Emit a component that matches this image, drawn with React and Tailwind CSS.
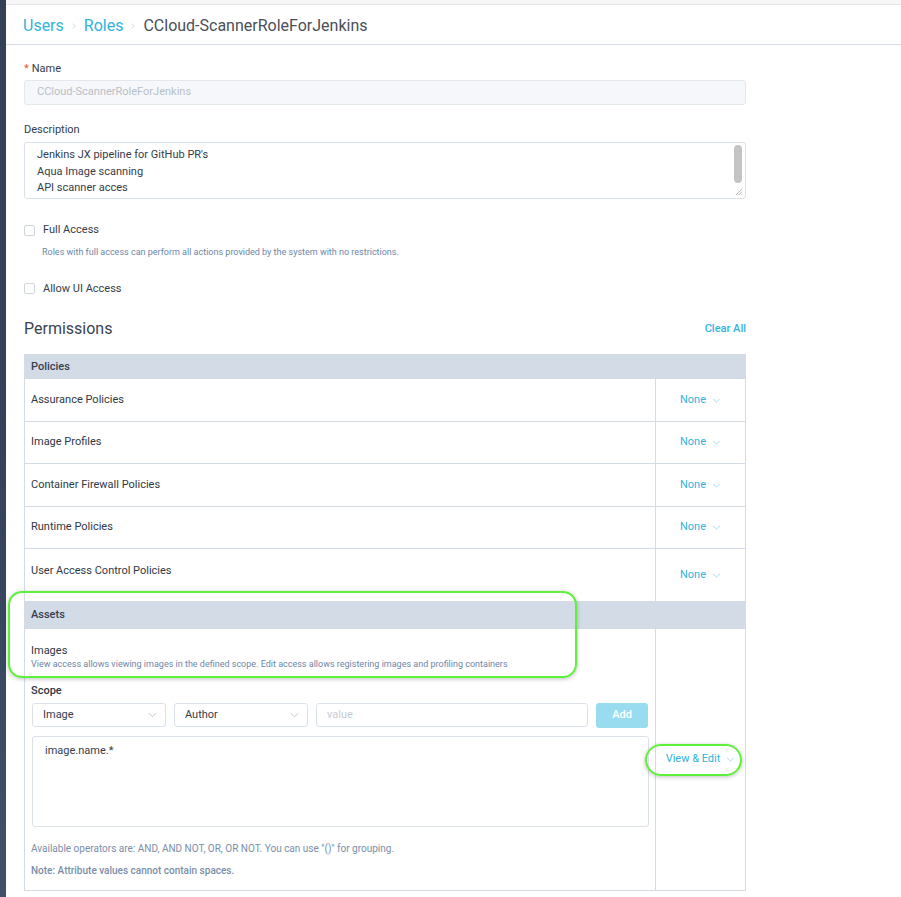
import React from "react";

const font = { fontFamily: "Roboto, 'Liberation Sans', sans-serif" };

const Chevron = ({ className = "" }) => (
  <svg viewBox="0 0 10 6" className={className} fill="none" stroke="currentColor" strokeWidth="1">
    <path d="M1 1l4 4 4-4" />
  </svg>
);

const policies = [
  { name: "Assurance Policies", h: "h-[43px]" },
  { name: "Image Profiles", h: "h-[42px]" },
  { name: "Container Firewall Policies", h: "h-[43px]" },
  { name: "Runtime Policies", h: "h-[42px]" },
  { name: "User Access Control Policies", h: "h-[53px]", last: true },
];

const Checkbox = ({ label }) => (
  <div className="flex items-center gap-[8px]">
    <span className="w-[11px] h-[11px] border border-[#cfd6df] rounded-[2px] bg-white" />
    <span className="text-[11px] text-[#343d4b]">{label}</span>
  </div>
);

const Select = ({ value, w }) => (
  <div className={`${w} h-[24px] border border-[#dbe1e8] rounded-[3px] flex items-center justify-between pl-[10px] pr-[8px]`}>
    <span className="text-[11px] text-[#343d4b]">{value}</span>
    <Chevron className="w-[9px] h-[6px] text-[#b5bfcb]" />
  </div>
);

export default function App() {
  return (
    <div className="relative flex min-h-[897px] bg-white overflow-hidden" style={font}>
      <div className="w-[6px] shrink-0 bg-gradient-to-b from-[#324156] via-[#33425a] to-[#3f5068]" />
      <div className="flex-1 flex flex-col">
        <div className="h-[5px] bg-[#f7f7f7] border-b border-[#e4e4e4]" />
        <div className="h-[40px] border-b border-[#d6dde5] flex items-center px-[17px] pt-[2px] text-[16px]">
          <span className="text-[#31b3dd]">Users</span>
          <Chevron className="w-[6px] h-[8px] mx-[7px] -rotate-90 text-[#b9c2cc]" />
          <span className="text-[#31b3dd]">Roles</span>
          <Chevron className="w-[6px] h-[8px] mx-[7px] -rotate-90 text-[#b9c2cc]" />
          <span className="text-[#4a4f57]">CCloud-ScannerRoleForJenkins</span>
        </div>

        <div className="w-[722px] ml-[18px] flex flex-col">
          <div className="mt-[17px] text-[11px] text-[#343d4b] leading-[14px]">
            <span className="text-[#f0592a] mr-[3px]">*</span>Name
          </div>
          <div className="mt-[4px] h-[25px] bg-[#f5f7fa] border border-[#e3e8ee] rounded-[3px] flex items-center px-[12px] text-[11px] text-[#b8bfc8]">
            CCloud-ScannerRoleForJenkins
          </div>

          <div className="mt-[18px] text-[11px] text-[#343d4b] leading-[14px]">Description</div>
          <div className="relative mt-[5px] h-[57px] border border-[#dbe1e8] rounded-[3px] pl-[12px] pt-[4px] text-[11px] leading-[16.5px] text-[#343d4b]">
            <div>Jenkins JX pipeline for GitHub PR's</div>
            <div>Aqua Image scanning</div>
            <div>API scanner acces</div>
            <div className="absolute right-[3px] top-[2px] w-[8px] h-[38px] rounded-[4px] bg-[#c4c4c4]" />
            <svg viewBox="0 0 10 10" className="absolute right-[2px] bottom-[2px] w-[9px] h-[9px]" stroke="#9a9a9a" strokeWidth="0.8">
              <path d="M9 2L2 9M9 5L5 9M9 8L8 9" />
            </svg>
          </div>

          <div className="mt-[23px]">
            <Checkbox label="Full Access" />
          </div>
          <div className="mt-[7px] ml-[18px] text-[9px] text-[#6e86a8] leading-[12px]">
            Roles with full access can perform all actions provided by the system with no restrictions.
          </div>
          <div className="mt-[23px]">
            <Checkbox label="Allow UI Access" />
          </div>

          <div className="mt-[20px] flex items-center justify-between">
            <span className="text-[16px] text-[#3b4350]">Permissions</span>
            <span className="text-[11px] font-medium text-[#31b3dd]">Clear All</span>
          </div>

          <div className="mt-[13px] border border-[#d3dbe6] border-b-0">
            <div className="h-[24px] bg-[#d3dbe6] flex items-center px-[6px] text-[11px] font-medium text-[#35404f]">
              Policies
            </div>
            {policies.map((p) => (
              <div key={p.name} className={`${p.h} flex border-b border-[#d3dbe6]`}>
                <div className={`flex-1 flex px-[6px] text-[11px] text-[#2f3844] ${p.last ? "pt-[14px]" : "items-center"}`}>
                  {p.name}
                </div>
                <div className="w-[90px] border-l border-[#d3dbe6] flex items-center justify-center gap-[6px] text-[11px] text-[#31b3dd]">
                  None
                  <Chevron className="w-[9px] h-[5px] text-[#8fd3ec]" />
                </div>
              </div>
            ))}
            <div className="h-[27px] bg-[#d3dbe6] flex items-center px-[6px] text-[11px] font-medium text-[#35404f]">
              Assets
            </div>
            <div className="flex border-b border-[#d3dbe6]">
              <div className="flex-1 px-[6px] pt-[15px] pb-[12px]">
                <div className="text-[11px] text-[#2f3844] leading-[13px]">Images</div>
                <div className="mt-[2px] text-[9px] text-[#6e86a8] leading-[11px]">
                  View access allows viewing images in the defined scope. Edit access allows registering images and profiling containers
                </div>
                <div className="mt-[14px] text-[11px] font-medium text-[#2f3844] leading-[13px]">Scope</div>
                <div className="mt-[6px] ml-[1px] flex gap-[8px] pr-[1px]">
                  <Select value="Image" w="w-[134px]" />
                  <Select value="Author" w="w-[134px]" />
                  <div className="flex-1 h-[24px] border border-[#dbe1e8] rounded-[3px] flex items-center px-[10px] text-[11px] text-[#c6ccd4]">
                    value
                  </div>
                  <div className="w-[52px] h-[25px] rounded-[3px] bg-[#9adcef] flex items-center justify-center text-[11px] font-medium text-white">
                    Add
                  </div>
                </div>
                <div className="mt-[8px] ml-[1px] h-[91px] border border-[#dbe1e8] rounded-[3px] px-[12px] pt-[6px] text-[11px] text-[#343d4b]">
                  image.name.*
                </div>
                <div className="mt-[15px] text-[10px] text-[#7a8ea9] leading-[14px]">
                  Available operators are: AND, AND NOT, OR, OR NOT. You can use "()" for grouping.
                </div>
                <div className="mt-[8px] text-[10px] font-medium text-[#7a8ea9] leading-[14px]">
                  Note: Attribute values cannot contain spaces.
                </div>
              </div>
              <div className="w-[90px] border-l border-[#d3dbe6] flex items-center justify-center gap-[6px] text-[11px] text-[#31b3dd]">
                View &amp; Edit
                <Chevron className="w-[9px] h-[5px] text-[#8fd3ec]" />
              </div>
            </div>
          </div>
        </div>
      </div>

      <div className="absolute left-[8px] top-[591px] w-[569px] h-[87px] border-2 border-[#5ef03a] rounded-[14px] shadow-[0_1px_4px_rgba(0,0,0,0.25)] pointer-events-none" />
      <div className="absolute left-[645px] top-[744px] w-[97px] h-[32px] border-2 border-[#5ef03a] rounded-full shadow-[0_1px_4px_rgba(0,0,0,0.25)] pointer-events-none" />
    </div>
  );
}
